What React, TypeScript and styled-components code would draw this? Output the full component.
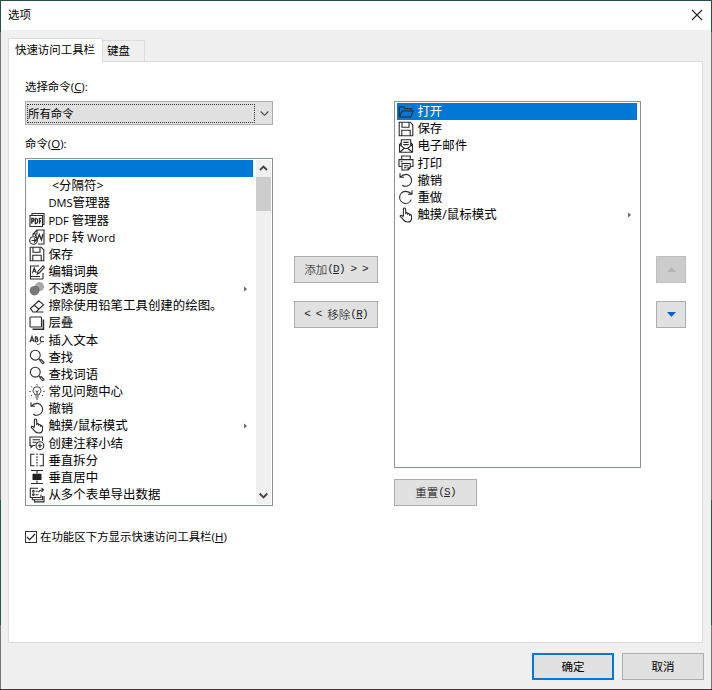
import React from "react";
import styled, { createGlobalStyle } from "styled-components";

const Global = createGlobalStyle`
  * { box-sizing: border-box; }
  body { margin: 0; background: #f0f0f0; overflow: hidden; }
`;

const UI_FONT = `"Open Sans", "Noto Sans CJK SC", sans-serif`;

const Frame = styled.div`
  width: 712px;
  height: 690px;
  padding: 1px;
  background: linear-gradient(#24524b 0 32px, #777 32px 500px, #245c4c 500px 625px, #777 625px 689px, #3d3a3d 689px);
`;
const Dialog = styled.div`
  height: 688px;
  display: flex;
  flex-direction: column;
  background: #f0f0f0;
  color: #000;
  font: 11.45px/16px ${UI_FONT};
  white-space: nowrap;
  cursor: default;
`;
const TitleBar = styled.header`
  height: 29px;
  flex: none;
  display: flex;
  align-items: center;
  justify-content: space-between;
  padding: 0 8px 1px 7px;
  background: #fff;
`;
const Tabs = styled.div`
  height: 31px;
  flex: none;
  display: flex;
  align-items: flex-end;
  padding-left: 7px;
`;
const Tab = styled.div<{ $active?: boolean }>`
  width: ${(p) => (p.$active ? 95 : 42)}px;
  height: ${(p) => (p.$active ? 24 : 21)}px;
  margin-bottom: ${(p) => (p.$active ? -1 : 0)}px;
  padding: ${(p) => (p.$active ? "3px 0 0 6px" : "2px 0 0 4px")};
  border: 1px solid #dcdcdc;
  border-bottom: 0;
  border-left-width: ${(p) => (p.$active ? 1 : 0)}px;
  background: ${(p) => (p.$active ? "#fff" : "#f0f0f0")};
  z-index: ${(p) => (p.$active ? 1 : 0)};
`;
const Panel = styled.main`
  height: 582px;
  width: 695px;
  flex: none;
  margin-left: 7px;
  padding: 17px 0 0 16px;
  border: 1px solid #dcdcdc;
  background: #fff;
  display: grid;
  grid-template-columns: 248px 84px 247px 30px;
  column-gap: 21px;
  align-items: start;
`;
const Column = styled.section<{ $top?: number; $shift?: number }>`
  display: flex;
  flex-direction: column;
  padding-top: ${(p) => p.$top ?? 0}px;
  margin-left: ${(p) => p.$shift ?? 0}px;
`;
const Label = styled.label`
  height: 16px;
`;
const Combo = styled.div`
  display: flex;
  align-items: center;
  justify-content: space-between;
  height: 24px;
  margin: 6px 0 11px;
  padding: 0 3px 0 1px;
  border: 1px solid #adadad;
  background: #e1e1e1;
`;
const ComboValue = styled.div`
  width: 228px;
  height: 19px;
  line-height: 17px;
  border: 1px dotted #333;
`;
const ListBox = styled.div<{ $height: number }>`
  display: flex;
  height: ${(p) => p.$height}px;
  padding: 1px 1px 1px 2px;
  border: 1px solid #8a929d;
  background: #fff;
`;
const CommandList = styled(ListBox)`
  margin-top: 6px;
`;
const ToolbarList = styled(ListBox)`
  width: 247px;
`;
const Rows = styled.div<{ $gap: number }>`
  flex: 1;
  margin-right: ${(p) => p.$gap}px;
`;
const Row = styled.div<{ $selected?: boolean }>`
  display: flex;
  align-items: center;
  height: 17.16px;
  padding-right: 6px;
  font-size: 12.45px;
  line-height: 17px;
  color: ${(p) => (p.$selected ? "#fff" : "#000")};
  background: ${(p) => (p.$selected ? "#0078d7" : "transparent")};
`;
const IconSlot = styled.span`
  width: 20px;
  flex: none;
  display: flex;
  padding-left: 1px;
`;
const RowText = styled.span<{ $indent?: boolean }>`
  flex: 1;
  padding-left: ${(p) => (p.$indent ? 4 : 0.4)}px;
`;
const Latin = styled.span`
  font-size: 11.1px;
`;
const ScrollBar = styled.div`
  width: 15px;
  display: flex;
  flex-direction: column;
  align-items: center;
  justify-content: space-between;
  background: #f0f0f0;
`;
const ScrollTop = styled.div`
  width: 15px;
`;
const ScrollCap = styled.div`
  height: 17px;
  display: grid;
  place-items: center;
`;
const Thumb = styled.div`
  height: 34px;
  background: #cdcdcd;
`;
const CheckLine = styled.div`
  display: flex;
  align-items: center;
  gap: 3px;
  margin-top: 23px;
`;
const CheckBox = styled.span`
  width: 12px;
  height: 12px;
  display: grid;
  place-items: center;
  border: 1px solid #333;
  background: #fff;
`;
const Button = styled.button<{ $w: number; $kind?: "primary" | "disabled"; $mono?: boolean }>`
  width: ${(p) => p.$w}px;
  height: 27px;
  flex: none;
  display: flex;
  align-items: center;
  justify-content: center;
  padding: 0 0 1px;
  border: ${(p) => (p.$kind === "primary" ? "2px solid #0078d7" : p.$kind === "disabled" ? "1px solid #bfbfbf" : "1px solid #adadad")};
  background: ${(p) => (p.$kind === "disabled" ? "#ccc" : "#e1e1e1")};
  color: #000;
  font-family: ${(p) => (p.$mono ? `"Liberation Mono", "Noto Sans CJK SC", monospace` : UI_FONT)};
  font-size: 11.5px;
  font-weight: ${(p) => (p.$mono ? 300 : 400)};
  white-space: pre;
`;
const Mono = styled.span`
  font-size: 11px;
  letter-spacing: -0.85px;
  color: #222;
`;
const Gap = styled.div`
  height: 18px;
`;
const Reset = styled.div`
  margin-top: 11px;
`;
const Footer = styled.footer`
  display: flex;
  justify-content: flex-end;
  gap: 8px;
  padding: 10px 7px 0 0;
`;

const art: Record<string, React.ReactNode> = {
  pdf: <><path d="M3 3V1.5h12v11h-1.5" /><path d="M1 3.5h12.5v11H1z" /><path d="M2.8 11.8V6.3h1.3q1.5 1.5 0 3H2.8M6.3 6.3v5.2q2.5 0 2.3-2.7T6.3 6.3M10.5 11.8V6.3h2M10.5 9H12" strokeWidth="1.3" /></>,
  word: <><path d="M4 7V5l4-4h7v14H9M4 5h4V1" /><path d="m6.5 5.500 1.700 5.500 2.100-5.500 2.100 5.500L14 5" strokeWidth="1.3" /><circle cx="4.5" cy="11.5" r="3.8" /><path d="M2.5 11.5h4M5 9.5l2 2-2 2" /></>,
  save: <path d="M1.2 1.2h11l2.6 2.6v11H1.2zM4 1.5v4.7h7V1.5M3.8 14.5V9.2h8.4v5.3" />,
  edit: <><path d="M10 2H1.5v10.5H11M1.5 12v3H14M14 9v6" /><path d="m3.4 9 1.9-5 2 5M4 7.3h2.7M8.3 10l.8-2.8 5-5.5 1.4 1.5-5 5.5z" /></>,
  opacity: <><circle cx="10.5" cy="5.700" r="4.6" fill="#aaa" stroke="none" /><circle cx="5.5" cy="9.7" r="4.8" fill="#777" stroke="none" /><path d="M6 5q4 .2 4.2 5" stroke="#555" strokeWidth=".6" /></>,
  eraser: <path d="M1.500 10.500 9.800 2.800l4.700 3.900L7 14H4zM5.200 7.200l5 4M5 14h9.5" />,
  cascade: <><rect x="1" y="2" width="11.5" height="10" rx=".7" /><path d="M14.4 4.5v9.7H3.5" strokeWidth="1.6" /></>,
  abc: <><path d="m1 10 2-5.5L5 10M1.8 8.2h2.4M6.3 4.7v5h1.4q1.5-.3 1.2-1.6T7 7q1.6 0 1.4-1.2T6.3 4.7M14.8 5.2q-3.5-1.6-3.6 2t3.6 2.2" strokeWidth="1.15" /><path d="m7.500 11.500 1.600 1.500 3-2.500" strokeWidth=".8" /></>,
  search: <><circle cx="6.3" cy="6.2" r="4.9" /><path d="m9.8 9.8 1.5 1.4m0 0 .8-.6 3 3-1.2 1.2-3-3z" /></>,
  bulb: <path d="M6 11c0-2-2-2-2-4.3a4 4 0 0 1 8 0C12 9 10 9 10 11zM6.2 13h3.6M7 15h2M8 11V8L6.5 6.8M8 8l1.5-1.2M8 0v1.3M2 2.3l1 1M14 2.3l-1 1M.3 7.5h1.4M14.3 7.5h1.4M2 12l1-1M14 12l-1-1" strokeWidth=".9" />,
  undo: <path d="M2 1.2v4h4M2.2 5.1Q5 2.2 8.8 2.4a6 6 0 1 1-4.6 10.8" />,
  redo: <path d="M14 1.2v4h-4M13.8 5.1Q11 2.2 7.2 2.4a6 6 0 1 0 6 8.2" />,
  touch: <path d="M5.4 9V2.1q.1-1.2 1.2-1.1t1.1 1.2v5.1V5.9q1-.8 2 .3V8 6.8q1-.8 2 .3V9 7.8q1.4-.7 1.8.8v3q-.2 3.4-4 3.4-2.7 0-4.2-2.4L2.2 9.3q.2-1.5 1.6-.9L5.4 10" />,
  comment: <><path d="M6 10.5H4l-2 2v-2H1V2h12.5v4M3.5 4.7h7.5M3.5 7.3h4" /><circle cx="10.9" cy="10.7" r="3.9" /><path d="M10.9 8.5v4.4M8.7 10.7h4.4" /></>,
  split: <><path d="M5.5 2.3H1.7v11.4h3.8M10.5 2.3h3.8v11.4h-3.8" /><path d="M8 1.5v13" strokeDasharray="1.6 1.2" /></>,
  center: <><path d="M2 1.5h12M2 14.5h12M8 1.5v3M8 11.5v3" /><rect x="3.5" y="4.7" width="9" height="6.4" rx=".7" fill="#222" stroke="none" /></>,
  export: <><path d="M9 1.2H1.3v9.3H12V7.5M3.3 10.5v2.3h10.2V9M5.500 12.8v2.1H15V9" /><circle cx="4.4" cy="4.3" r=".8" /><circle cx="4.4" cy="7.7" r=".8" /><path d="M6.5 4.3h2.3M6.5 7.7h3M9.5 5.3q1-2.5 4.7-2.5M12.5.8l2 2-2 2" /></>,
  open: <path d="M1.3 13V3h4.5l1.4 1.8h6V7M1.5 13 4 7h11.2l-2.4 6z" />,
  mail: <><path d="M3 5 1.5 6.4v7.8h13V6.4L13 5M3.3 8.3V1.8h9.4v6.5M1.5 6.5l5 4h3l5-4M1.8 14l4.7-3.7M14.2 14l-4.7-3.7" /><path d="M5.3 4.3h5.4M5.3 6.7h5.4" strokeWidth="1.3" /></>,
  print: <><path d="M3.7 4.5V1h8.6v3.5M3.7 11.5H1V4.6h14v6.9h-2.6M2.7 6.8h2" /><path d="M4 8.5h8.2v4.2l-2 2.3H4zM6 10.8h4.4M6 12.8h2.5M12 12.7h-2V15" /></>,
};

const Icon = ({ name }: { name: string }) => (
  <svg width="16" height="16" viewBox="0 0 16 16" fill="none" stroke="#2b2b2b" strokeWidth="1.1">{art[name]}</svg>
);
const Chevron = ({ up, thin }: { up?: boolean; thin?: boolean }) => (
  <svg width="9" height="7" viewBox="0 0 9 7" fill="none" stroke="#444" strokeWidth={thin ? 1.1 : 1.9}>
    <path d={up ? "m1 5 3.5-3.5L8 5" : "M.7 1.5 4.5 5.3l3.8-3.8"} />
  </svg>
);

type Item = { icon?: string; text: React.ReactNode; selected?: boolean; indent?: boolean; sub?: boolean };

const commands: Item[] = [
  { text: "", selected: true },
  { text: "<分隔符>", indent: true },
  { text: <><Latin>DMS</Latin>管理器</> },
  { icon: "pdf", text: <><Latin>PDF </Latin>管理器</> },
  { icon: "word", text: <><Latin>PDF </Latin>转<Latin> Word</Latin></> },
  { icon: "save", text: "保存" },
  { icon: "edit", text: "编辑词典" },
  { icon: "opacity", text: "不透明度", sub: true },
  { icon: "eraser", text: "擦除使用铅笔工具创建的绘图。" },
  { icon: "cascade", text: "层叠" },
  { icon: "abc", text: "插入文本" },
  { icon: "search", text: "查找" },
  { icon: "search", text: "查找词语" },
  { icon: "bulb", text: "常见问题中心" },
  { icon: "undo", text: "撤销" },
  { icon: "touch", text: "触摸/鼠标模式", sub: true },
  { icon: "comment", text: "创建注释小结" },
  { icon: "split", text: "垂直拆分" },
  { icon: "center", text: "垂直居中" },
  { icon: "export", text: "从多个表单导出数据" },
];
const toolbar: Item[] = [
  { icon: "open", text: "打开", selected: true },
  { icon: "save", text: "保存" },
  { icon: "mail", text: "电子邮件" },
  { icon: "print", text: "打印" },
  { icon: "undo", text: "撤销" },
  { icon: "redo", text: "重做" },
  { icon: "touch", text: "触摸/鼠标模式", sub: true },
];

const ItemRows = ({ items, gap }: { items: Item[]; gap: number }) => (
  <Rows $gap={gap}>
    {items.map((it, i) => (
      <Row key={i} $selected={it.selected}>
        <IconSlot>{it.icon && <Icon name={it.icon} />}</IconSlot>
        <RowText $indent={it.indent}>{it.text}</RowText>
        {it.sub && <svg width="3" height="6"><path d="M0 .5 3 3 0 5.5z" fill="#666" /></svg>}
      </Row>
    ))}
  </Rows>
);

export default function App() {
  return (
    <Frame>
      <Global />
      <Dialog>
        <TitleBar>
          选项
          <svg width="12" height="12" viewBox="0 0 12 12" stroke="#222" strokeWidth="1.1"><path d="m1 1 10 10M11 1 1 11" /></svg>
        </TitleBar>
        <Tabs>
          <Tab $active>快速访问工具栏</Tab>
          <Tab>键盘</Tab>
        </Tabs>
        <Panel>
          <Column>
            <Label>选择命令(<u>C</u>):</Label>
            <Combo><ComboValue>所有命令</ComboValue><Chevron thin /></Combo>
            <Label>命令(<u>O</u>):</Label>
            <CommandList $height={348}>
              <ItemRows items={commands} gap={3} />
              <ScrollBar>
                <ScrollTop><ScrollCap><Chevron up /></ScrollCap><Thumb /></ScrollTop>
                <ScrollCap><Chevron /></ScrollCap>
              </ScrollBar>
            </CommandList>
            <CheckLine>
              <CheckBox><svg width="10" height="10" viewBox="0 0 10 10" fill="none" stroke="#222" strokeWidth="1.2"><path d="m1 5 2.7 2.7L9 2" /></svg></CheckBox>
              <span>在功能区下方显示快速访问工具栏(<u>H</u>)</span>
            </CheckLine>
          </Column>
          <Column $top={177}>
            <Button $w={84} $mono>添加<Mono>(<u>D</u>) &gt; &gt;</Mono></Button>
            <Gap />
            <Button $w={84} $mono><Mono>&lt; &lt; </Mono>移除<Mono>(<u>R</u>)</Mono></Button>
          </Column>
          <Column $top={22} $shift={-5}>
            <ToolbarList $height={367}>
              <ItemRows items={toolbar} gap={2} />
            </ToolbarList>
            <Reset><Button $w={83} $mono>重置<Mono>(<u>S</u>)</Mono></Button></Reset>
          </Column>
          <Column $top={177} $shift={-11}>
            <Button $w={30} $kind="disabled"><svg width="9" height="5"><path d="M0 5 4.5 0 9 5z" fill="#b5b5b5" /></svg></Button>
            <Gap />
            <Button $w={30}><svg width="9" height="5"><path d="M0 0h9L4.500 5z" fill="#0a5fce" /></svg></Button>
          </Column>
        </Panel>
        <Footer>
          <Button $w={82} $kind="primary">确定</Button>
          <Button $w={82}>取消</Button>
        </Footer>
      </Dialog>
    </Frame>
  );
}
